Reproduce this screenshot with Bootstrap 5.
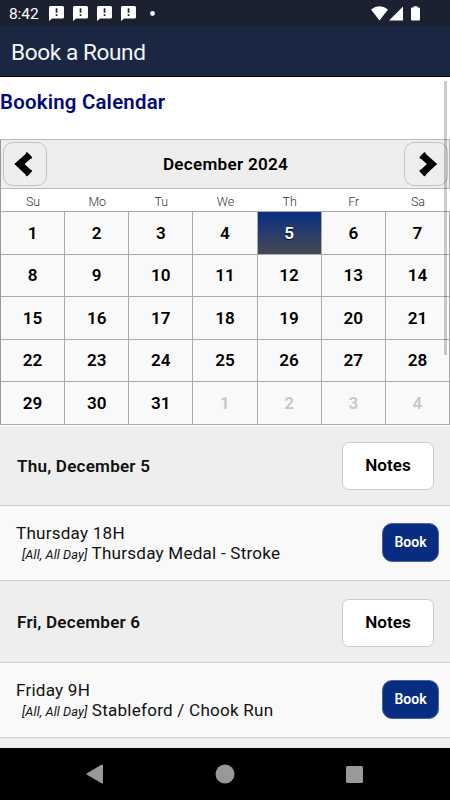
<!DOCTYPE html>
<html lang="en">
<head>
<meta charset="utf-8">
<meta name="viewport" content="width=device-width, initial-scale=1">
<title>Book a Round</title>
<link href="https://cdn.jsdelivr.net/npm/bootstrap@5.3.0/dist/css/bootstrap.min.css" rel="stylesheet">
<style>
body{font-family:Roboto,"Liberation Sans",sans-serif;color:#111;line-height:1.2;width:450px}
svg{display:block}
.status{height:26px;background:#1b2131;padding:0 30px 0 9px;font-size:15.5px}
.clock{letter-spacing:-.1px;padding-top:2px}
.alerts{gap:9px;margin-left:10px}
.appbar{height:51px;background:#192743;border-bottom:1px solid #000;padding:3px 0 0 11px;font-size:22.6px;letter-spacing:-.4px;color:#f4f4f4}
.content{height:671px}
.page-title{height:62px;padding-bottom:12px;font-size:20.4px;font-weight:600;letter-spacing:.22px;color:#00087d}
.cal-head{height:50px;background:#eee;border:1px solid #bbb;border-left-color:#999;padding:0 1px 0 2px;font-size:17.1px;font-weight:600;letter-spacing:.28px;color:#000}
.nav-btn{width:44px;height:44px;border:1px solid #c4c4c4;border-radius:10px;background:#eee;padding:0}
.cal-grid{display:grid;grid-template-columns:repeat(7,1fr);border-left:1px solid #999}
.dow{height:22px;font-size:12.4px;font-weight:300;color:#333;padding-top:4px}
.days{grid-template-rows:43px 42px 43px 42px 43px;border-top:1px solid #aaa}
.day{background:#f9f9f9;border-right:1px solid #aaa;border-bottom:1px solid #aaa;font-size:17.1px;font-weight:600;color:#000}
.other{color:#c8c8c8}
.picked{background:linear-gradient(#0a2e82,#454954);color:#fff;text-shadow:0 1px 1px #000}
.date-row{height:82px;background:#eee;border-bottom:1px solid #ccc;padding:2px 16px 0 17px;font-size:17.1px;font-weight:600;letter-spacing:.2px}
.date-row:first-child{height:81px;border-top:1px solid #fff;padding-top:0}
.date-row:first-child span{padding-top:2px}
.notes{width:92px;height:48px;border:1px solid #ccc;border-radius:7px;background:#fff;font-size:17.1px;font-weight:600;color:#000;padding:0}
.event-row{height:75px;background:#f9f9f9;border-bottom:1px solid #ccc;padding:0 11px 2px 16px;font-size:17.1px;line-height:20.5px;letter-spacing:.22px}
.event-text{padding-top:4px}
.tag{font-size:12.8px;font-style:italic;margin-left:6px;letter-spacing:.08px}
.book{width:57px;height:39px;border:1px solid #4a64a0;border-radius:10px;background:#082c80;color:#fff;font-size:14px;font-weight:600;letter-spacing:0;padding:0}
.thumb{right:3px;top:4px;width:3px;height:274px;background:rgba(0,0,0,.2)}
.navbar-sys{height:52px;background:#000;padding:0 87px 0 86px}
</style>
<script src="https://cdn.jsdelivr.net/npm/bootstrap@5.3.0/dist/js/bootstrap.bundle.min.js"></script>
</head>
<body class="overflow-hidden">
<svg width="0" height="0" class="position-absolute"><symbol id="alert" viewBox="0 0 15 15"><path fill="#fff" fill-rule="evenodd" d="M1.500 0h12Q15 0 15 1.500v9.500Q15 12.500 13.500 12.500H3L0 15V1.500Q0 0 1.500 0ZM6.700 2.200v4.600h1.700V2.200ZM6.700 8.200v1.700h1.700V8.200Z"/></symbol></svg>
<header>
<div class="status d-flex align-items-center text-white">
<span class="clock">8:42</span>
<div class="alerts d-flex">
<svg width="15" height="15"><use href="#alert"/></svg>
<svg width="15" height="15"><use href="#alert"/></svg>
<svg width="15" height="15"><use href="#alert"/></svg>
<svg width="15" height="15"><use href="#alert"/></svg>
</div>
<svg width="19" height="5"><circle cx="16.500" cy="2.500" r="2.400" fill="#fff"/></svg>
<svg class="ms-auto" width="49" height="15" fill="#fff"><path d="M0 3.500Q8.500-3 17 3.500L8.500 14.500ZM18 14.500 32 .5v14ZM40 2.500Q40 1.500 41 1.500h1.500V.2h4v1.300H48q1 0 1 1v11q0 1-1 1h-7q-1 0-1-1Z"/></svg>
</div>
<div class="appbar d-flex align-items-center">Book a Round</div>
</header>
<main class="content position-relative overflow-hidden bg-white">
<h1 class="page-title d-flex align-items-center m-0">Booking Calendar</h1>
<section>
<div class="cal-head d-flex align-items-center justify-content-between">
<button class="nav-btn" aria-label="Previous"><svg width="42" height="42" viewBox="0 0 42 42"><path d="M24.500 13 15.500 21l9 8.500" fill="none" stroke="#000" stroke-width="7"/><path d="m23 10.500 3.800 4M23 32l3.800-4" stroke="#000" stroke-width="2.500" stroke-linecap="round"/></svg></button>
<span>December 2024</span>
<button class="nav-btn" aria-label="Next"><svg width="42" height="42" viewBox="0 0 42 42"><path d="M18 13 27 21l-9 8.500" fill="none" stroke="#000" stroke-width="7"/><path d="m19.500 10.500-3.800 4M19.500 32l-3.800-4" stroke="#000" stroke-width="2.500" stroke-linecap="round"/></svg></button>
</div>
<div class="cal-grid text-center" id="dow"></div>
<div class="cal-grid days" id="days"></div>
</section>
<section id="events"></section>
<div class="thumb position-absolute"></div>
</main>
<footer class="navbar-sys d-flex align-items-center justify-content-between">
<svg width="18" height="20" viewBox="0 0 18 20"><path d="M1.500 10 16 1.500v17Z" fill="#999" stroke="#999" stroke-width="2" stroke-linejoin="round"/></svg>
<svg width="20" height="20"><circle cx="10" cy="10" r="9.500" fill="#999"/></svg>
<svg width="17" height="17"><rect width="17" height="17" rx="1.500" fill="#999"/></svg>
</footer>
<script>
const $ = s => document.querySelector(s);
$('#dow').innerHTML = ['Su','Mo','Tu','We','Th','Fr','Sa'].map(d => `<div class="dow d-flex align-items-center justify-content-center">${d}</div>`).join('');
$('#days').innerHTML = Array.from({length:35}, (_, i) => {
  const other = i > 30;
  return `<div class="day d-flex align-items-center justify-content-center ${other ? 'other' : i === 4 ? 'picked' : ''}">${other ? i - 30 : i + 1}</div>`;
}).join('');
$('#events').innerHTML = [['Thu, December 5','Thursday 18H','Thursday Medal - Stroke'],['Fri, December 6','Friday 9H','Stableford / Chook Run']].map(([d,t,n]) =>
 `<div class="date-row d-flex align-items-center justify-content-between"><span>${d}</span><button class="notes">Notes</button></div>
  <div class="event-row d-flex align-items-center justify-content-between"><div class="event-text">${t}<br><span class="tag">[All, All Day]</span> ${n}</div><button class="book">Book</button></div>`).join('') + '<div class="date-row"></div>';
</script>
</body>
</html>
